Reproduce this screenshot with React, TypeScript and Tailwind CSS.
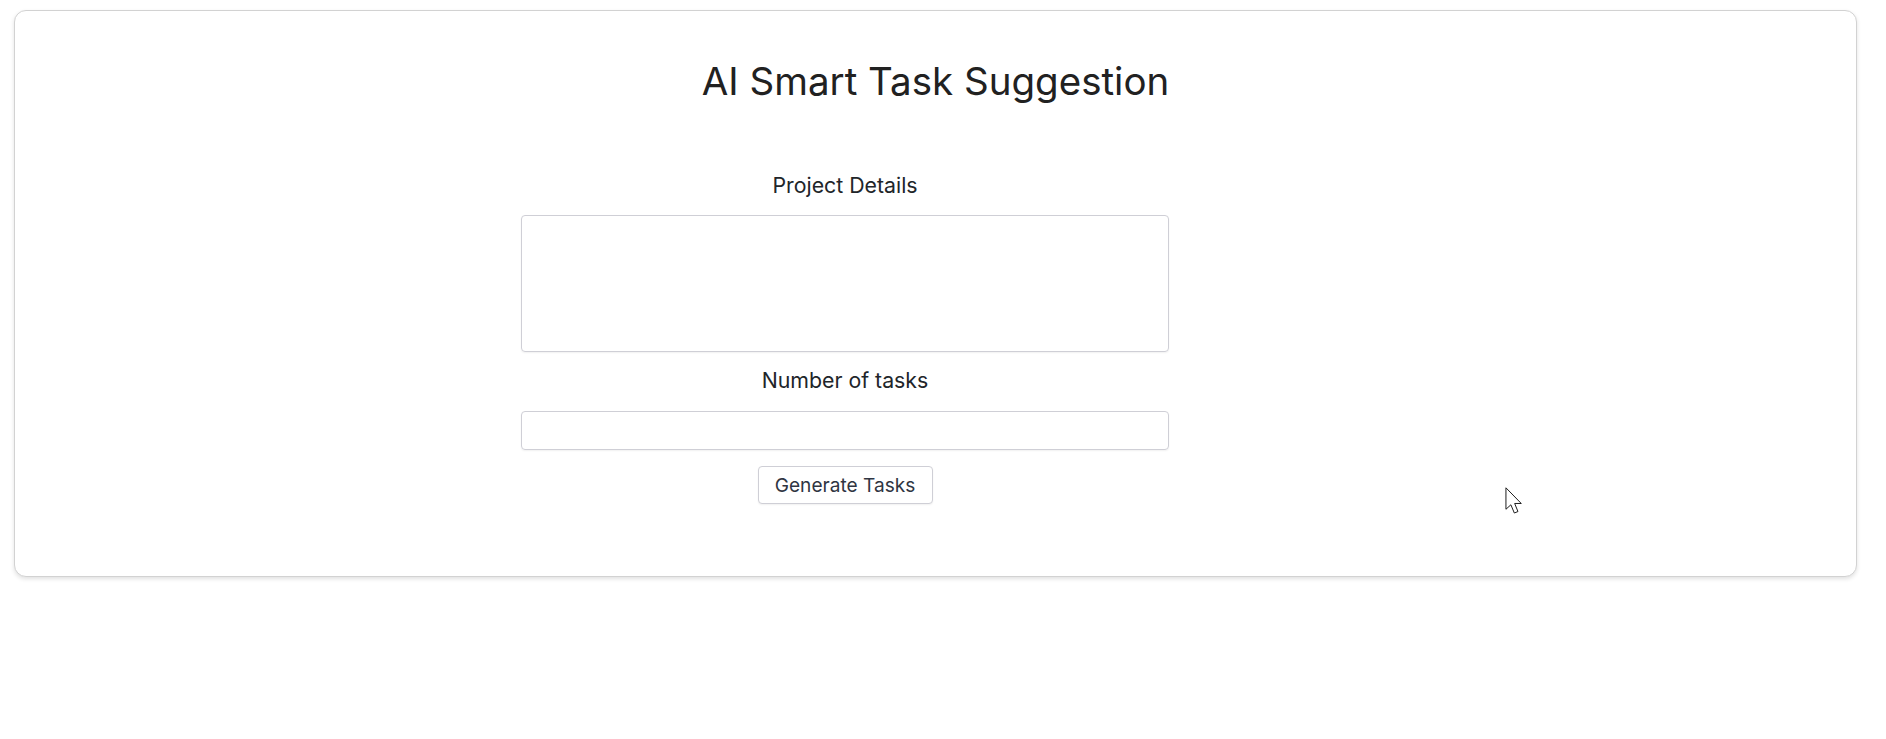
export default function App() {
  return (
    <div className="min-h-[739px] bg-white pt-[10px] font-['Inter',sans-serif]">
      <div className="relative ml-[14px] w-[1843px] h-[567px] rounded-xl border border-[#d2d2d2] bg-white shadow-[0_2px_4px_rgba(0,0,0,0.12)]">
        <h1 className="mt-[50px] text-center text-[38.5px]/[40px] text-[#212121]">AI Smart Task Suggestion</h1>
        <div className="ml-[506px] mt-[70px] flex w-[648px] flex-col items-center">
          <label className="text-[21.3px]/[28px] text-[#212529]">Project Details</label>
          <textarea className="mt-[16px] h-[137px] w-full resize-none rounded border border-[#cfcfd6] shadow-[0_1px_2px_rgba(0,0,0,0.06)]" />
          <label className="mt-[14px] text-[21.3px]/[28px] text-[#212529]">Number of tasks</label>
          <input type="text" className="mt-[17px] h-[39px] w-full rounded border border-[#cfcfd6] shadow-[0_1px_2px_rgba(0,0,0,0.06)]" />
          <button className="mt-[16px] h-[38px] w-[175px] rounded border border-[#cfcfd6] bg-white text-[19.1px]/[26px] text-[#2f3542] shadow-[0_1px_2px_rgba(0,0,0,0.06)]">
            Generate Tasks
          </button>
        </div>
        {/* mouse cursor in the capture */}
        <svg
          className="absolute left-[1490px] top-[476px]"
          width="20"
          height="28"
          viewBox="0 0 12 17"
        >
          <path
            d="M0.5 0.5 L0.5 13.5 L3.5 10.8 L5.6 15.8 L7.8 14.9 L5.8 10 L9.8 10 Z"
            fill="white"
            stroke="#1a1a1a"
            strokeWidth="0.6"
            strokeLinejoin="miter"
          />
        </svg>
      </div>
    </div>
  );
}
